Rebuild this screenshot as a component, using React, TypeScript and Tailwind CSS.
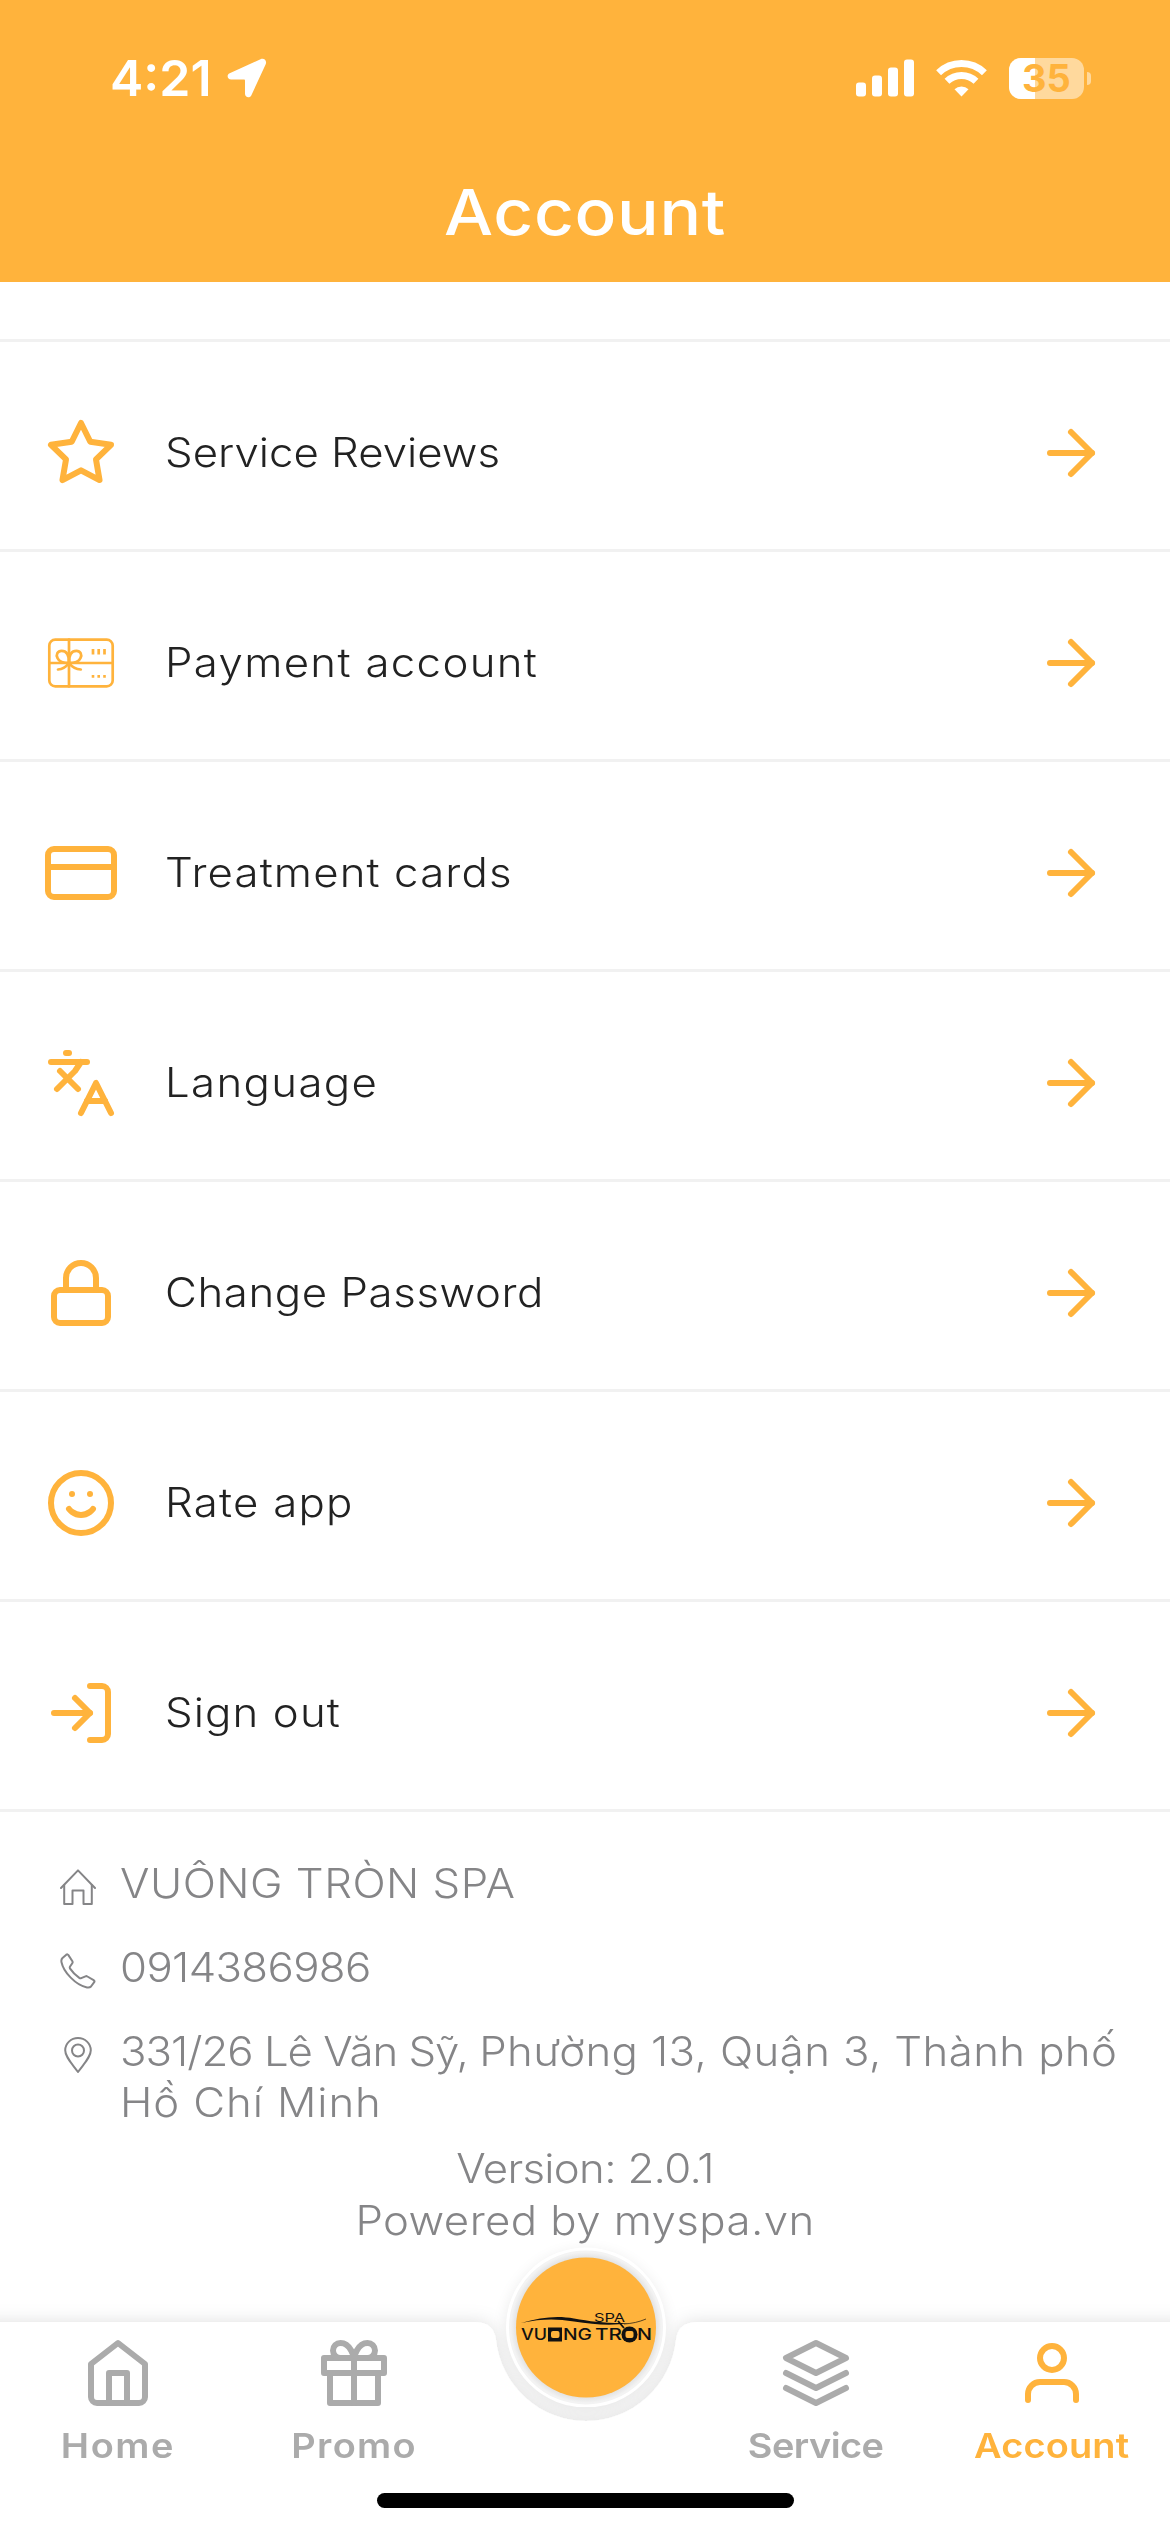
import type { ReactNode } from "react";
import { Languages } from "lucide-react";
import {
  FiArrowRight,
  FiCreditCard,
  FiGift,
  FiHome,
  FiLayers,
  FiLock,
  FiLogIn,
  FiSmile,
  FiStar,
  FiUser,
} from "react-icons/fi";

function GiftCardIcon() {
  return (
    <svg className="size-[72px]" viewBox="0 0 72 72" fill="none" stroke="currentColor" strokeWidth="2.7" strokeLinecap="round">
      <rect x="4.300" y="12.600" width="63.400" height="46.800" rx="6" />
      <path d="M24 12.600v46.800M4.300 36h63.400" />
      <path d="M24 35c0-8-3.400-11.200-7.400-11.200-4 0-6 4-4 7.400C14 34.500 18.500 36 24 36" />
      <path d="M24 35c0-8 3.400-11.200 7.400-11.200 4 0 6 4 4 7.400C34 34.500 29.500 36 24 36" />
      <path d="M24 36c-3 4-6.500 6.300-11 6.500M24 36c3 4 7 6.300 11.800 6.500" />
      <path d="M48 22v5.500M53.700 22v5.500M59.500 22v5.500" strokeLinecap="butt" />
      <path d="M46.700 49.300h2.600M52.400 49.300h2.600M58.200 49.300h2.600" strokeLinecap="butt" />
    </svg>
  );
}

const menu: { label: string; icon: ReactNode; tracking: string }[] = [
  { label: "Service Reviews", icon: <FiStar />, tracking: "tracking-normal" },
  { label: "Payment account", icon: <GiftCardIcon />, tracking: "tracking-[1.24px]" },
  { label: "Treatment cards", icon: <FiCreditCard />, tracking: "tracking-[1.05px]" },
  { label: "Language", icon: <Languages className="size-[72px]" />, tracking: "tracking-[1.27px]" },
  { label: "Change Password", icon: <FiLock />, tracking: "tracking-[0.55px]" },
  { label: "Rate app", icon: <FiSmile />, tracking: "tracking-[1.17px]" },
  { label: "Sign out", icon: <FiLogIn />, tracking: "tracking-[1.04px]" },
];

function StatusBar() {
  return (
    <div className="flex h-[156px] items-center justify-between pl-[110px] pr-[79px]">
      <div className="flex items-center">
        <span className="text-[50px] leading-[60px] font-semibold">4:21</span>
        <svg className="ml-[15px] size-10" viewBox="0 0 40 40" fill="currentColor">
          <path d="M33.500 1.300C37 -.300 40.200 2.600 38.700 6.200L24.400 37.200C22.900 40.500 18 39.700 18 35.800V22.600c0-.7-.4-1.100-1.100-1.100H4.200C.3 21.500-.7 16.700 2.700 15.200z" />
        </svg>
      </div>
      <div className="flex items-center">
        <svg className="h-[38px] w-[58px]" viewBox="0 0 58 38" fill="currentColor">
          <rect x="0" y="23.500" width="10" height="14" rx="3" />
          <rect x="16" y="16.500" width="10" height="21" rx="3" />
          <rect x="32" y="8.500" width="10" height="29" rx="3" />
          <rect x="48" y="0.500" width="10" height="37" rx="3" />
        </svg>
        <svg className="ml-[22px] h-[38px] w-[51px]" viewBox="0 0 51 38" fill="none" stroke="currentColor" strokeWidth="7">
          <path d="M2.600 13.700A33 33 0 0 1 48.400 13.700" />
          <path d="M11 22.300A21 21 0 0 1 40 22.300" />
          <path d="M25.500 37.500l-7-7.200a10 10 0 0 1 14 0z" fill="currentColor" stroke="none" />
        </svg>
        <div className="relative ml-[22px] flex h-[41px] w-[75px] items-center justify-center rounded-[12px] bg-[#ffd99d]">
          <div className="absolute inset-y-0 left-0 w-[26px] rounded-l-[12px] bg-white" />
          <span className="relative text-[38px] leading-[41px] font-bold text-[#ffb33c]">35</span>
        </div>
        <div className="ml-[3px] h-[13px] w-[4px] rounded-r-full bg-[#ffd99d]" />
      </div>
    </div>
  );
}

function MenuRow({ label, icon, tracking }: { label: string; icon: ReactNode; tracking: string }) {
  return (
    <div className="flex h-[210px] items-center border-b-[3px] border-[#f1f1f1] pt-[15px] pl-[45px] pr-[63px]">
      <div className="size-[72px] text-[72px] text-[#ffb33c]">{icon}</div>
      <span className={`mr-auto ml-12 origin-left scale-x-108 text-[40.5px] font-light text-[#222] ${tracking}`}>{label}</span>
      <FiArrowRight className="size-[72px] text-[#ffb33c]" />
    </div>
  );
}

function ShopInfo() {
  return (
    <div className="px-[60px] pt-[46px] text-[40.5px] leading-[51px] font-light text-[#858587]">
      <div className="flex gap-6">
        <svg className="mt-[11px] size-9" viewBox="0 0 36 36" fill="none" stroke="currentColor" strokeWidth="2" strokeLinejoin="round" strokeLinecap="round">
          <path d="M1 19 18 1.400 35 19" />
          <path d="M4.200 16v19h8.300V21.600h11V35h8.300V16" />
        </svg>
        <span className="origin-left scale-x-108 tracking-[0.46px]">VUÔNG TRÒN SPA</span>
      </div>
      <div className="mt-[33px] flex gap-6">
        <svg className="mt-[11px] size-9" viewBox="0 0 36 36" fill="none" stroke="currentColor" strokeWidth="2" strokeLinejoin="round">
          <path d="M6.300 1.700c.9-.6 1.600-.4 2.100.4l4 6.200c.4.700.3 1.300-.1 1.900l-2.400 3.600c-.3.700-.2 1.200.2 1.800 2.400 3.600 5.500 6.600 9.200 9.300.6.400 1.200.5 1.900.2l4.300-1.800c.7-.3 1.300-.2 1.900.2l6.200 3.600c.9.600 1.100 1.300.6 2.100l-3.200 4.300c-1 1.100-2.300 1.300-4 1C15.500 32 3.600 19.200 1.500 9.200c-.4-1.800-.2-3 1-4.200z" />
        </svg>
        <span className="origin-left scale-x-108 tracking-[-0.59px]">0914386986</span>
      </div>
      <div className="mt-[33px] flex gap-6">
        <svg className="mt-[11px] size-9 shrink-0" viewBox="0 0 36 36" fill="none" stroke="currentColor" strokeWidth="2">
          <path d="M18 35C11.500 26 5.200 20 5.200 13.300a12.800 12.300 0 0 1 25.600 0C30.800 20 24.500 26 18 35z" strokeLinejoin="round" />
          <circle cx="18" cy="13.500" r="6" />
        </svg>
        <div className="origin-left scale-x-108 whitespace-nowrap">
          <div className="tracking-[0.37px]">
            <span className="tracking-[-0.93px]">331/26 Lê Văn Sỹ, </span>
            Phường 13, Quận 3, Thành phố
          </div>
          <div className="tracking-[0.83px]">Hồ Chí Minh</div>
        </div>
      </div>
      <div className="mt-[15px] scale-x-108 text-center leading-[52px]">
        <div className="tracking-[-0.63px]">Version: 2.0.1</div>
        <div className="tracking-[0.39px]">Powered by myspa.vn</div>
      </div>
    </div>
  );
}

function SpaLogo() {
  return (
    <svg className="absolute top-[-75px] left-[506px] size-[160px]" viewBox="0 0 160 160">
      <defs>
        <radialGradient id="ring">
          <stop offset="0.86" stopColor="#dcdcdc" />
          <stop offset="0.96" stopColor="#f3f3f3" />
        </radialGradient>
      </defs>
      <circle cx="80" cy="80.500" r="78.500" fill="url(#ring)" stroke="#fff" strokeWidth="3" />
      <circle cx="80" cy="80.500" r="70" fill="#ffb33c" />
      <path d="M15 76C35 70 52 68.500 68 71.500 85 74.500 100 76.500 122 76 106 79 88 77.500 68 74.500 50 71.500 36 71.500 15 76z" fill="#111" />
      <path d="M118 77c8-.500 15-2 22-5" fill="none" stroke="#111" strokeWidth="0.700" />
      <path d="M112 74l6 7" stroke="#111" strokeWidth="1.800" />
      <g fill="#111" fontFamily="Inter, sans-serif">
        <text x="88" y="75" fontSize="12" fontWeight="400" textLength="31" lengthAdjust="spacingAndGlyphs">SPA</text>
        <g fontSize="16" fontWeight="500">
          <text x="15" y="93" textLength="26" lengthAdjust="spacingAndGlyphs">VU</text>
          <text x="57" y="93" textLength="29" lengthAdjust="spacingAndGlyphs">NG</text>
          <text x="89" y="93" textLength="27" lengthAdjust="spacingAndGlyphs">TR</text>
          <text x="131" y="93" textLength="15" lengthAdjust="spacingAndGlyphs">N</text>
        </g>
      </g>
      <rect x="42" y="80.500" width="14" height="14" fill="#111" />
      <rect x="45" y="84" width="8.500" height="7" rx="2" fill="#ffb33c" />
      <circle cx="123.500" cy="87.500" r="8" fill="#111" />
      <rect x="119.500" y="84" width="8" height="7" rx="2" fill="#ffb33c" />
    </svg>
  );
}

function Tab({ label, icon, tracking, active }: { label: string; icon: ReactNode; tracking: string; active?: boolean }) {
  return (
    <div className={`flex w-[236px] flex-col items-center pt-[15px] ${active ? "text-[#ffb33c]" : "text-[#ababab]"}`}>
      <div className="text-[72px]">{icon}</div>
      <span className={`mt-[16px] scale-x-110 text-[34.5px] leading-[42px] font-semibold ${tracking}`}>{label}</span>
    </div>
  );
}

function TabBar() {
  return (
    <div className="relative mt-auto flex h-[210px] justify-between">
      {/* bar with a round notch for the logo button */}
      <svg className="absolute bottom-0 left-0 h-[310px] w-full" viewBox="0 0 1170 310">
        <defs>
          <filter id="barShadow" x="-5%" y="-30%" width="110%" height="160%">
            <feDropShadow dx="0" dy="0" stdDeviation="9" floodColor="#000" floodOpacity="0.13" />
          </filter>
          <filter id="discShadow" x="-30%" y="-30%" width="160%" height="160%">
            <feGaussianBlur stdDeviation="8" />
          </filter>
        </defs>
        <circle cx="586" cy="110" r="80" fill="#000" opacity="0.09" filter="url(#discShadow)" />
        <path
          d="M-20 100H474C488 100 494.500 106 496 118A90.500 90.500 0 0 0 676 118C677.500 106 684 100 698 100H1190V340H-20z"
          fill="#fff"
          filter="url(#barShadow)"
        />
      </svg>
      <div className="relative flex">
        <Tab label="Home" icon={<FiHome />} tracking="tracking-[1.4px]" />
        <Tab label="Promo" icon={<FiGift />} tracking="tracking-[1.2px]" />
      </div>
      <SpaLogo />
      <div className="relative flex">
        <Tab label="Service" icon={<FiLayers />} tracking="tracking-[-0.5px]" />
        <Tab label="Account" icon={<FiUser />} tracking="tracking-[0.15px]" active />
      </div>
      <div className="absolute bottom-[24px] left-[377px] h-[15px] w-[417px] rounded-full bg-black" />
    </div>
  );
}

export default function App() {
  return (
    <div className="flex h-[2532px] w-[1170px] flex-col overflow-hidden bg-white font-['Inter',sans-serif]">
      <header className="h-[282px] bg-[#ffb33c] text-white">
        <StatusBar />
        <h1 className="scale-x-110 pt-[18px] text-center text-[63px] leading-[76px] font-medium tracking-[0.6px]">Account</h1>
      </header>
      <div className="h-[60px] border-b-[3px] border-[#f1f1f1]" />
      <div>
        {menu.map((m) => (
          <MenuRow key={m.label} {...m} />
        ))}
      </div>
      <ShopInfo />
      <TabBar />
    </div>
  );
}
